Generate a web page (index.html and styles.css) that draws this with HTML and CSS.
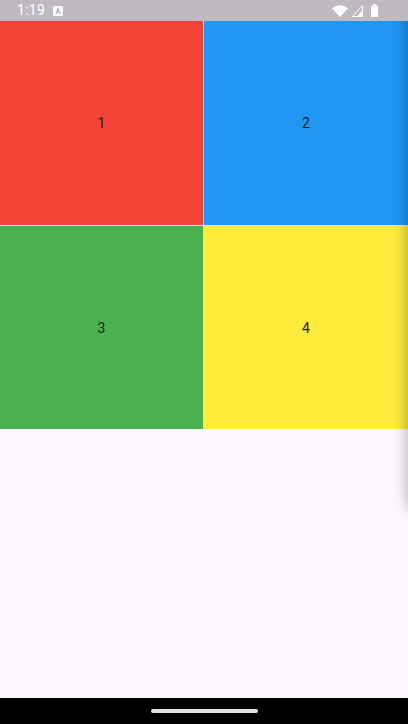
FILE: index.html
```html
<!DOCTYPE html>
<html>
<head>
<meta charset="utf-8">
<link rel="stylesheet" href="styles.css">
</head>
<body>
<div class="screen">
  <div class="statusbar">
    <div class="sb-left">
      <span class="time">1:19</span>
      <svg class="a-icon" width="10" height="10" viewBox="0 0 10 10"><rect x="0" y="0" width="10" height="10" rx="1.5" fill="#fff"/><path d="M3 8 L5 2.2 L7 8 M3.8 6 H6.2" stroke="#bdb8bf" stroke-width="1.3" fill="none"/></svg>
    </div>
    <div class="sb-right">
      <svg width="16" height="12" viewBox="0 0 16 12"><path d="M0 3.2 Q8 -2.5 16 3.2 L8 12 Z" fill="#fff"/></svg>
      <svg width="11" height="12" viewBox="0 0 11 12"><path d="M10.5 0.5 V11.5 H0.5 Z" fill="none" stroke="#fff" stroke-width="1"/><path d="M10.5 5 V11.5 H5 Z" fill="#fff"/></svg>
      <svg class="batt" width="7" height="13" viewBox="0 0 7 13"><rect x="2" y="0" width="3" height="1.5" fill="#fff"/><rect x="0" y="1.5" width="7" height="11.5" rx="1" fill="#fff"/></svg>
    </div>
  </div>
  <div class="grid">
    <div class="tile red">1</div>
    <div class="tile blue">2</div>
    <div class="tile green">3</div>
    <div class="tile yellow">4</div>
  </div>
  <div class="fill"></div>
  <div class="navbar"><div class="pill"></div></div>
  <div class="edge-panel"></div>
</div>
</body>
</html>
```
FILE: styles.css
```css
html, body {
  margin: 0;
  padding: 0;
}
body {
  width: 408px;
  height: 724px;
  overflow: hidden;
  font-family: Roboto, "Noto Sans", sans-serif;
  background: #fdf7fe;
}
.screen {
  position: relative;
  width: 408px;
  height: 724px;
  display: flex;
  flex-direction: column;
  overflow: hidden;
  background: #fdf7fe;
}
.statusbar {
  position: relative;
  z-index: 3;
  height: 21px;
  background: #bfbac1;
  display: flex;
  align-items: center;
  justify-content: space-between;
  padding: 0 30px 0 17px;
  color: #fff;
}
.sb-left {
  display: flex;
  align-items: center;
  gap: 8px;
}
.time {
  font-size: 14px;
  letter-spacing: 0.3px;
  line-height: 21px;
}
.sb-right {
  display: flex;
  align-items: center;
  gap: 4px;
}
.batt {
  margin-left: 4px;
}
.grid {
  display: grid;
  grid-template-columns: 203px 204px;
  grid-template-rows: 204px 203px;
  gap: 1px;
  background: #e6e1e8;
}
.tile {
  display: flex;
  align-items: center;
  justify-content: center;
  font-size: 14px;
  color: #1d1b20;
}
.red { background: #f44336; }
.blue { background: #2196f3; }
.green { background: #4caf50; }
.yellow { background: #ffeb3b; }
.fill {
  flex: 1;
  background: #fdf7fe;
}
.navbar {
  height: 26px;
  background: #000;
  display: flex;
  align-items: center;
  justify-content: center;
  position: relative;
  z-index: 3;
}
.pill {
  width: 107px;
  height: 4px;
  border-radius: 2px;
  background: #e2e2e2;
}
.edge-panel {
  position: absolute;
  left: 408px;
  top: 0;
  width: 300px;
  height: 520px;
  border-radius: 0 0 28px 28px;
  box-shadow: 0 0 14px 2px rgba(0, 0, 0, 0.28);
  z-index: 2;
}
```
